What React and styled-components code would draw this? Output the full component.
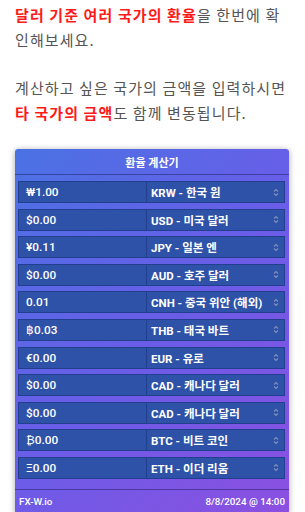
import React from "react";
import styled, { createGlobalStyle } from "styled-components";

const Global = createGlobalStyle`
  html, body { margin: 0; padding: 0; background: #fff; }
  body { font-family: "Noto Sans CJK KR", "Noto Sans", sans-serif; }
`;

const Page = styled.div`
  padding: 3px 15px 0 15px;
  width: 305px;
  box-sizing: border-box;
`;

const Para = styled.p`
  margin: 0 0 24px 0;
  font-size: 15px;
  letter-spacing: 1.1px;
  line-height: 24.5px;
  color: #555;
  font-family: "Noto Sans CJK KR", sans-serif;
`;

const Red = styled.span`
  color: #ff1a1a;
  font-weight: 700;
`;

const Card = styled.div`
  margin-top: 11px;
  width: 274px;
  box-sizing: border-box;
  border-radius: 3px;
  background: linear-gradient(135deg, #4a72e4 0%, #6a5de8 50%, #8c4fe0 100%);
  box-shadow: 0 1px 6px rgba(0, 0, 0, 0.35);
  color: #fff;
  font-family: Roboto, "Noto Sans CJK KR", sans-serif;
  overflow: hidden;
`;

const Header = styled.div`
  height: 25px;
  display: flex;
  align-items: center;
  justify-content: center;
  font-size: 11px;
  font-weight: 700;
  border-bottom: 1px solid rgba(20, 20, 80, 0.45);
`;

const Body = styled.div`
  display: flex;
  flex-direction: column;
  gap: 5.6px;
  padding: 6px 4px 10px 3px;
  border-bottom: 1px solid rgba(20, 20, 80, 0.45);
`;

const Row = styled.div`
  display: flex;
  height: 22px;
`;

const Amount = styled.div`
  width: 129px;
  box-sizing: border-box;
  background: #2e52a7;
  border: 1px solid #213f8e;
  display: flex;
  align-items: center;
  padding-left: 7px;
  font-size: 11.8px;
  font-weight: 500;
`;

const Select = styled.div`
  flex: 1;
  box-sizing: border-box;
  background: #2e52a7;
  border: 1px solid #213f8e;
  border-left: none;
  display: flex;
  align-items: center;
  justify-content: space-between;
  padding: 0 5px 0 4px;
  font-size: 11.5px;
  font-weight: 700;
`;

const Footer = styled.div`
  height: 24px;
  display: flex;
  align-items: center;
  justify-content: space-between;
  padding: 0 4px 0 4px;
  font-size: 9.8px;
  font-weight: 500;
`;

const Arrows = () => (
  <svg width="6" height="9" viewBox="0 0 6 9">
    <path d="M1 3.5 L3 1.5 L5 3.5" fill="none" stroke="#7f8fb8" strokeWidth="1.1" />
    <path d="M1 5.5 L3 7.5 L5 5.5" fill="none" stroke="#7f8fb8" strokeWidth="1.1" />
  </svg>
);

const rows = [
  ["₩1.00", "KRW - 한국 원"],
  ["$0.00", "USD - 미국 달러"],
  ["¥0.11", "JPY - 일본 엔"],
  ["$0.00", "AUD - 호주 달러"],
  ["0.01", "CNH - 중국 위안 (해외)"],
  ["฿0.03", "THB - 태국 바트"],
  ["€0.00", "EUR - 유로"],
  ["$0.00", "CAD - 캐나다 달러"],
  ["$0.00", "CAD - 캐나다 달러"],
  ["₿0.00", "BTC - 비트 코인"],
  ["Ξ0.00", "ETH - 이더 리움"],
];

export default function App() {
  return (
    <>
      <Global />
      <Page>
        <Para>
          <Red>달러 기준 여러 국가의 환율</Red>을 한번에 확인해보세요.
        </Para>
        <Para>
          계산하고 싶은 국가의 금액을 입력하시면 <Red>타 국가의 금액</Red>도 함께 변동됩니다.
        </Para>
        <Card>
          <Header>환율 계산기</Header>
          <Body>
            {rows.map(([a, c], i) => (
              <Row key={i}>
                <Amount>{a}</Amount>
                <Select>
                  <span>{c}</span>
                  <Arrows />
                </Select>
              </Row>
            ))}
          </Body>
          <Footer>
            <span>FX-W.io</span>
            <span>8/8/2024 @ 14:00</span>
          </Footer>
        </Card>
      </Page>
    </>
  );
}
